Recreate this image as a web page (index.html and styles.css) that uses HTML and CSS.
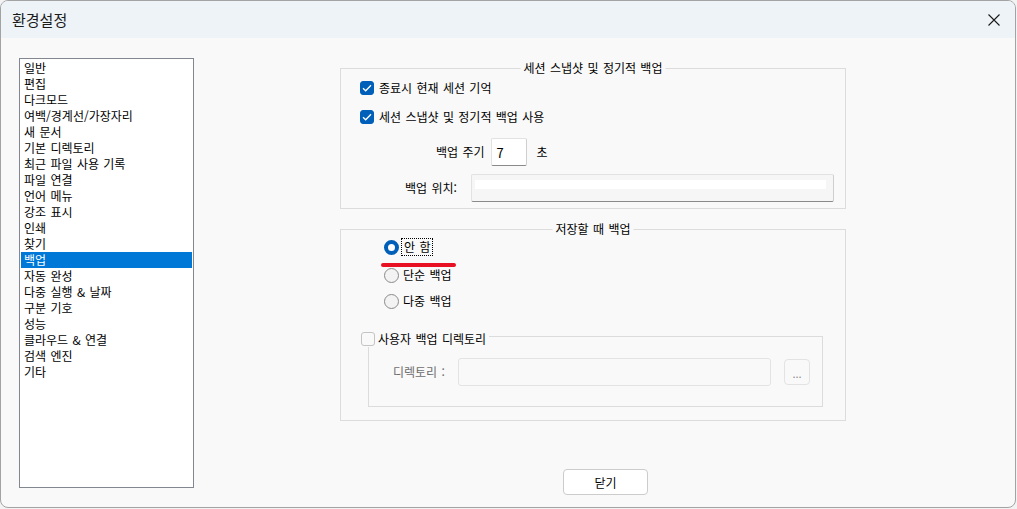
FILE: index.html
```html
<!DOCTYPE html>
<html lang="ko">
<head>
<meta charset="utf-8">
<title>환경설정</title>
<link rel="stylesheet" href="styles.css">
</head>
<body>
<div class="window">
  <div class="titlebar">
    <span class="title">환경설정</span>
    <svg class="close-x" width="12" height="12" viewBox="0 0 12 12"><path d="M0.5 0.5 L11.5 11.5 M11.5 0.5 L0.5 11.5" stroke="#1a1a1a" stroke-width="1.1" fill="none"/></svg>
  </div>
  <div class="content">
    <div class="list">
      <div class="item">일반</div>
      <div class="item">편집</div>
      <div class="item">다크모드</div>
      <div class="item">여백/경계선/가장자리</div>
      <div class="item">새 문서</div>
      <div class="item">기본 디렉토리</div>
      <div class="item">최근 파일 사용 기록</div>
      <div class="item">파일 연결</div>
      <div class="item">언어 메뉴</div>
      <div class="item">강조 표시</div>
      <div class="item">인쇄</div>
      <div class="item">찾기</div>
      <div class="item selected">백업</div>
      <div class="item">자동 완성</div>
      <div class="item">다중 실행 &amp; 날짜</div>
      <div class="item">구분 기호</div>
      <div class="item">성능</div>
      <div class="item">클라우드 &amp; 연결</div>
      <div class="item">검색 엔진</div>
      <div class="item">기타</div>
    </div>
    <div class="panel">
      <div class="group group-snapshot">
        <div class="legend">세션 스냅샷 및 정기적 백업</div>
        <div class="check-row first">
          <span class="checkbox checked"><svg width="10" height="8" viewBox="0 0 10 8"><path d="M1 4.2 L3.7 6.8 L9 1.2" stroke="#fff" stroke-width="1.3" fill="none"/></svg></span>
          <span class="label">종료시 현재 세션 기억</span>
        </div>
        <div class="check-row second">
          <span class="checkbox checked"><svg width="10" height="8" viewBox="0 0 10 8"><path d="M1 4.2 L3.7 6.8 L9 1.2" stroke="#fff" stroke-width="1.3" fill="none"/></svg></span>
          <span class="label">세션 스냅샷 및 정기적 백업 사용</span>
        </div>
        <div class="period-row">
          <span class="label">백업 주기</span>
          <span class="input period-input">7</span>
          <span class="label unit">초</span>
        </div>
        <div class="location-row">
          <span class="label loc-label">백업 위치:</span>
          <span class="input loc-input"><span class="loc-strip"></span></span>
        </div>
      </div>

      <div class="group group-save">
        <div class="legend">저장할 때 백업</div>
        <div class="radio-row r1">
          <span class="radio checked"></span>
          <span class="label focus">안 함</span>
        </div>
        <div class="radio-row r2">
          <span class="radio"></span>
          <span class="label">단순 백업</span>
        </div>
        <div class="radio-row r3">
          <span class="radio"></span>
          <span class="label">다중 백업</span>
        </div>
        <div class="underline"></div>

        <div class="inner-group">
          <div class="inner-legend">
            <span class="checkbox"></span>
            <span class="label">사용자 백업 디렉토리</span>
          </div>
          <div class="dir-row">
            <span class="label disabled dir-label">디렉토리 :</span>
            <span class="input disabled-input dir-input"></span>
            <span class="dots-btn">...</span>
          </div>
        </div>
      </div>

      <button class="close-btn">닫기</button>
    </div>
  </div>
</div>
</body>
</html>
```

FILE: styles.css
```css
html, body {
  margin: 0;
  padding: 0;
  background: #f3f3f3;
}

body {
  font-family: "Noto Sans CJK KR", "Noto Sans", sans-serif;
  font-size: 12px;
  word-spacing: 1px;
  color: #000;
}

.window {
  width: 1016px;
  height: 508px;
  box-sizing: border-box;
  border: 1px solid #a3a3a3;
  border-radius: 8px;
  overflow: hidden;
  display: flex;
  flex-direction: column;
  background: #f9f9f9;
}

.titlebar {
  height: 37px;
  flex: none;
  background: #eef3f8;
  display: flex;
  align-items: center;
  justify-content: space-between;
  padding: 0 15px 0 11px;
}

.title {
  font-size: 15px;
  word-spacing: 0;
  color: #1a1a1a;
  line-height: 18px;
}

.close-x {
  display: block;
}

.content {
  flex: 1;
  display: flex;
  align-items: flex-start;
  padding: 20px 0 0 18px;
}

/* category list */
.list {
  width: 175px;
  height: 430px;
  box-sizing: border-box;
  border: 1px solid #828790;
  background: #fff;
  padding: 1px;
  flex: none;
}

.item {
  height: 16px;
  line-height: 16px;
  padding-left: 3px;
  white-space: nowrap;
}

.item.selected {
  background: #0078d7;
  color: #fff;
}

/* right panel */
.panel {
  margin-left: 146px;
  margin-top: 10px;
  width: 506px;
  display: flex;
  flex-direction: column;
}

.group {
  position: relative;
  border: 1px solid #dcdcdc;
  box-sizing: border-box;
}

.legend {
  position: absolute;
  top: -8px;
  left: 50%;
  transform: translateX(-50%);
  background: #f9f9f9;
  padding: 0 3px;
  line-height: 14px;
  white-space: nowrap;
}

.label {
  line-height: 16px;
  white-space: nowrap;
}

.group-snapshot {
  height: 141px;
  padding-left: 19px;
}

.check-row {
  display: flex;
  align-items: center;
  height: 16px;
  gap: 5px;
}

.check-row.first {
  margin-top: 11px;
}

.check-row.second {
  margin-top: 13px;
}

.checkbox {
  width: 14px;
  height: 14px;
  box-sizing: border-box;
  border-radius: 3px;
  border: 1px solid #8d8d8d;
  background: #f5f5f5;
  display: flex;
  align-items: center;
  justify-content: center;
  flex: none;
}

.checkbox.checked {
  background: #005fb8;
  border-color: #005fb8;
}

.input {
  box-sizing: border-box;
  height: 28px;
  background: #fff;
  border: 1px solid #e2e2e2;
  border-bottom-color: #8a8a8a;
  border-right-color: #cfcfcf;
  display: flex;
  align-items: center;
}

.period-row {
  display: flex;
  align-items: center;
  margin-top: 13px;
  padding-left: 76px;
}

.period-input {
  width: 36px;
  margin-left: 6px;
  padding-left: 5px;
  font-size: 13px;
  border-radius: 2px;
}

.unit {
  margin-left: 10px;
}

.location-row {
  display: flex;
  align-items: center;
  margin-top: 8px;
  padding-left: 45px;
}

.loc-label {
  width: 66px;
}

.loc-input {
  width: 363px;
  background: #f6f6f6;
  align-items: flex-start;
  padding: 5px 0 0 3px;
  border-radius: 2px;
}

.loc-strip {
  display: block;
  width: 351px;
  height: 9px;
  background: #fff;
}

/* save backup group */
.group-save {
  margin-top: 20px;
  height: 192px;
  padding-left: 43px;
}

.radio-row {
  display: flex;
  align-items: center;
  height: 16px;
  gap: 4px;
}

.radio-row.r1 { margin-top: 9px; }
.radio-row.r2 { margin-top: 12px; }
.radio-row.r3 { margin-top: 10px; }

.radio {
  width: 15px;
  height: 15px;
  box-sizing: border-box;
  border-radius: 50%;
  border: 1px solid #8a8a8a;
  background: #f3f3f3;
  flex: none;
}

.radio.checked {
  border: 4px solid #005fb8;
  background: #fff;
}

.focus {
  outline: 1px dotted #000;
  padding: 0 2px;
  margin-left: -1px;
}

.underline {
  position: absolute;
  left: 40px;
  top: 33px;
  width: 75px;
  height: 4px;
  border-radius: 2px;
  background: #e81123;
}

.inner-group {
  position: relative;
  margin-top: 27px;
  margin-left: -16px;
  width: 455px;
  height: 71px;
  box-sizing: border-box;
  border: 1px solid #dcdcdc;
  padding-left: 24px;
}

.inner-legend {
  position: absolute;
  top: -6px;
  left: -8px;
  display: flex;
  align-items: center;
  gap: 3px;
  background: #f9f9f9;
  padding-right: 3px;
}

.inner-legend .checkbox {
  border-color: #c4c4c4;
  background: #f9f9f9;
}

.dir-row {
  display: flex;
  align-items: center;
  margin-top: 21px;
}

.dir-label {
  width: 65px;
}

.disabled {
  color: #6d6d6d;
}

.disabled-input {
  background: #f9f9f9;
  border: 1px solid #e3e3e3;
  border-radius: 3px;
}

.dir-input {
  width: 313px;
}

.dots-btn {
  width: 26px;
  height: 26px;
  box-sizing: border-box;
  margin-left: 13px;
  border: 1px solid #e3e3e3;
  border-radius: 4px;
  background: #f9f9f9;
  color: #8a8a8a;
  display: flex;
  align-items: flex-end;
  justify-content: center;
  font-size: 11px;
  line-height: 16px;
  padding-bottom: 3px;
}

.close-btn {
  margin-top: 48px;
  margin-left: 223px;
  align-self: flex-start;
  width: 85px;
  height: 26px;
  box-sizing: border-box;
  background: #fff;
  border: 1px solid #cccccc;
  border-radius: 4px;
  font-family: "Noto Sans CJK KR", "Noto Sans", sans-serif;
  font-size: 12px;
  color: #000;
  padding: 0;
}
```
